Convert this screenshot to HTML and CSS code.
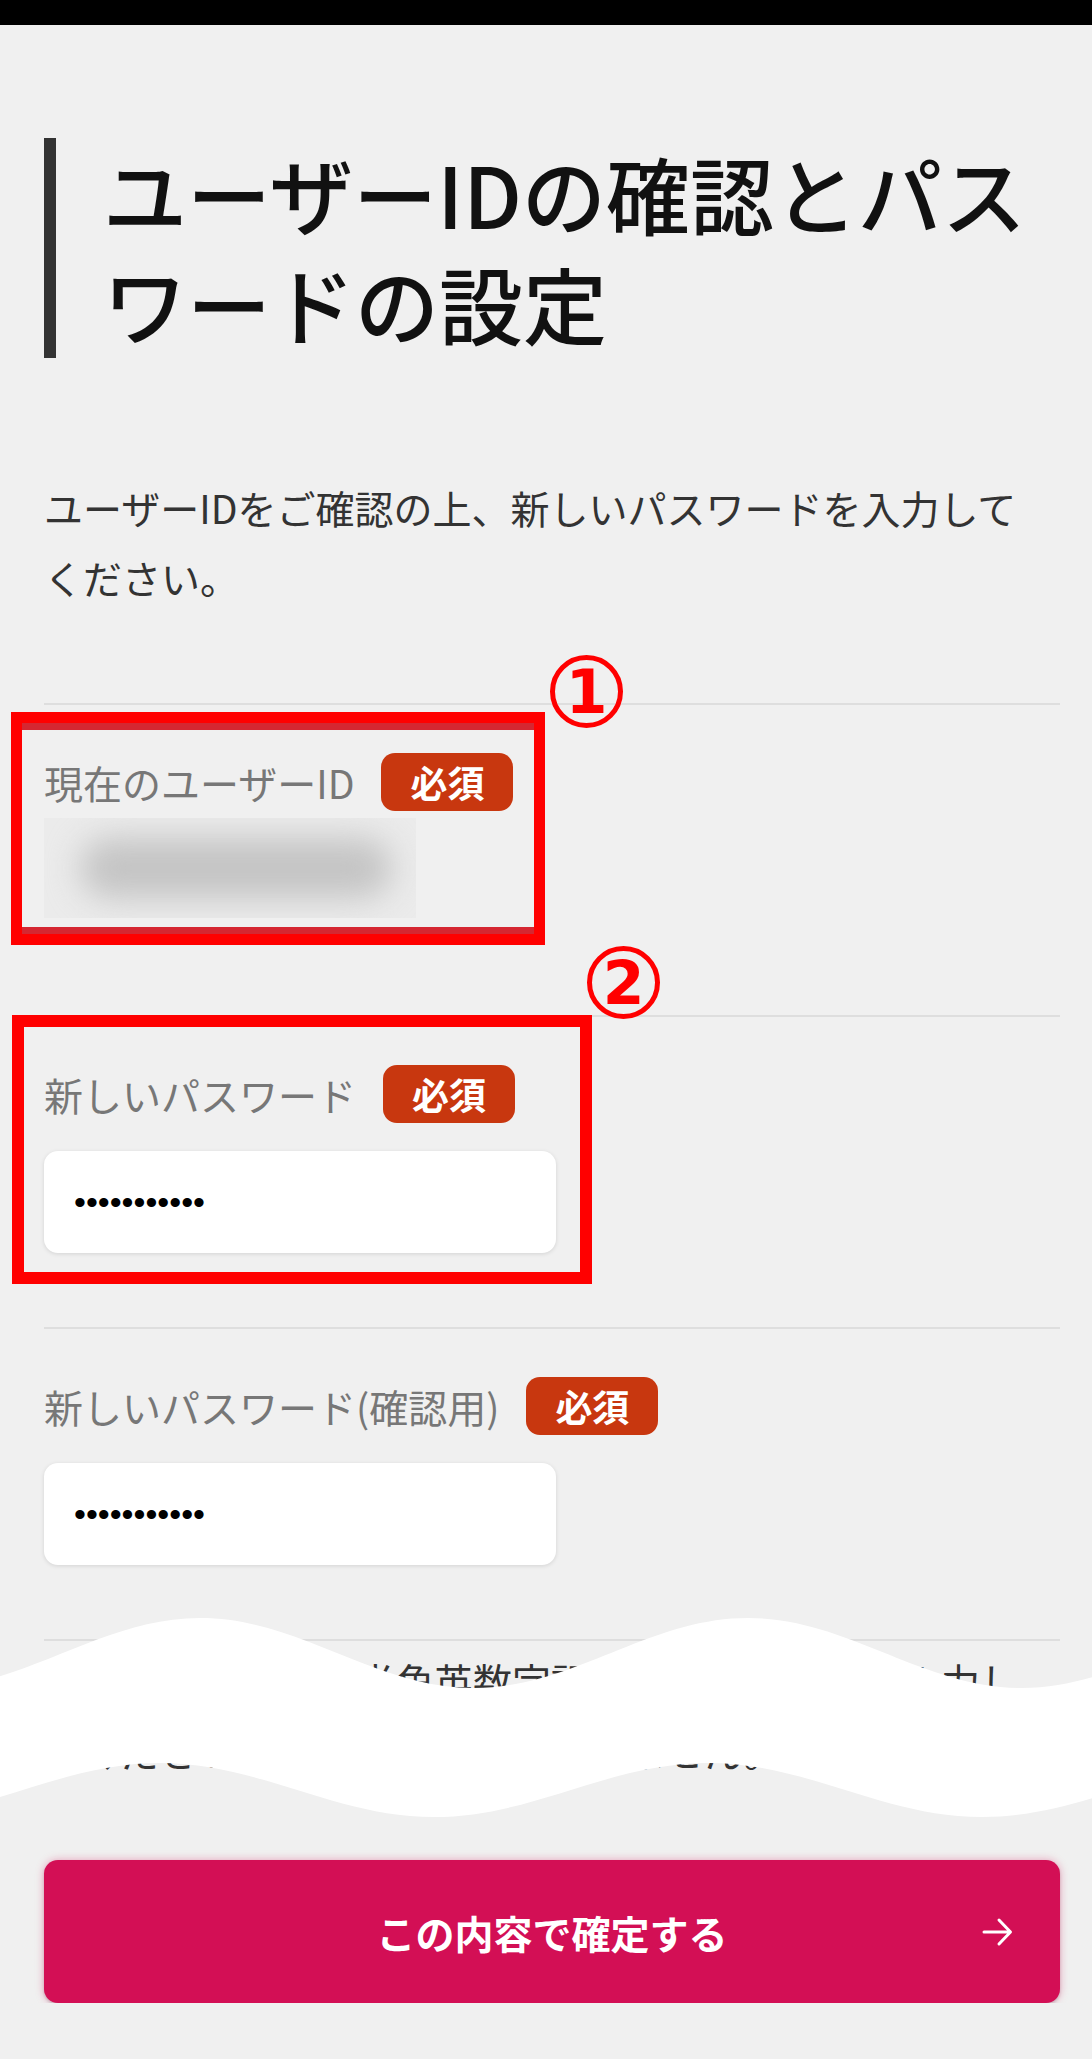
FILE: index.html
```html
<!DOCTYPE html>
<html lang="ja">
<head>
<meta charset="utf-8">
<title>ユーザーIDの確認とパスワードの設定</title>
<link rel="stylesheet" href="styles.css">
</head>
<body>
<div class="topbar"></div>
<main class="page">
  <h1 class="title">ユーザーIDの確認とパスワードの設定</h1>
  <p class="lead">ユーザーIDをご確認の上、新しいパスワードを入力してください。</p>

  <div class="form">
    <div class="field">
      <div class="field-head">
        <span class="field-label">現在のユーザーID</span>
        <span class="badge">必須</span>
      </div>
      <div class="masked"><div class="masked-blob"></div></div>
      <div class="mark-box mark-box--1"></div>
      <div class="mark-num mark-num--1">1</div>
    </div>

    <div class="field">
      <div class="field-head">
        <span class="field-label">新しいパスワード</span>
        <span class="badge">必須</span>
      </div>
      <div class="input">•••••••••••</div>
      <div class="mark-box mark-box--2"></div>
      <div class="mark-num mark-num--2">2</div>
    </div>

    <div class="field">
      <div class="field-head">
        <span class="field-label">新しいパスワード(確認用)</span>
        <span class="badge">必須</span>
      </div>
      <div class="input">•••••••••••</div>
    </div>
  </div>

  <div class="note">
    <p class="note-text">パスワードは必ず半角英数字記号を組み合わせて入力してください。記号は一部使用できません。</p>
    <svg class="cut" viewBox="0 0 1092 240" preserveAspectRatio="none" aria-hidden="true">
      <path fill="#ffffff" d="M -74 88 C 26 88, 100 18, 200 18 C 300 18, 374 88, 474 88 C 574 88, 648 18, 748 18 C 848 18, 922 88, 1022 88 C 1122 88, 1196 18, 1296 18 L 1256 163 C 1156 163, 1082 217, 982 217 C 882 217, 808 163, 708 163 C 608 163, 534 217, 434 217 C 334 217, 260 163, 160 163 C 60 163, -14 217, -114 217 Z"/>
    </svg>
  </div>

  <button class="submit" type="button">
    <span class="submit-label">この内容で確定する</span>
    <svg class="submit-arrow" viewBox="0 0 31 34" aria-hidden="true">
      <path d="M2 17 H28 M17 5 L28.5 17 L17 29" fill="none" stroke="#ffffff" stroke-width="3" stroke-linecap="round" stroke-linejoin="round"/>
    </svg>
  </button>
</main>
</body>
</html>
```
FILE: styles.css
```css
* { box-sizing: border-box; }

html, body { margin: 0; padding: 0; }

body {
  background: #f0f0f0;
  font-family: "Noto Sans CJK JP", "Noto Sans", sans-serif;
  color: #333;
}

.topbar {
  height: 25px;
  background: #000;
}

.page {
  padding: 0 32px 0 44px;
}

.title {
  margin: 113px 0 0;
  border-left: 12px solid #333;
  padding-left: 47px;
  font-size: 84px;
  line-height: 110px;
  font-weight: 500;
  color: #111;
}

.lead {
  margin: 114px 0 0;
  padding-right: 24px;
  font-size: 39px;
  line-height: 70px;
  color: #333;
}

.form {
  margin-top: 91px;
}

.field {
  position: relative;
  border-top: 2px solid #dedede;
  padding: 48px 0 74px;
}

.field-head {
  display: flex;
  align-items: center;
  gap: 27px;
  height: 58px;
}

.field-label {
  font-size: 39px;
  line-height: 1;
  color: #777;
}

.badge {
  display: flex;
  align-items: center;
  justify-content: center;
  height: 58px;
  padding: 0 29px;
  background: #c8370f;
  color: #fff;
  border-radius: 14px;
  font-size: 37px;
  font-weight: 700;
  line-height: 1;
}

.input {
  margin-top: 28px;
  width: 512px;
  height: 102px;
  background: #fff;
  border-radius: 14px;
  box-shadow: 0 1px 4px rgba(0, 0, 0, 0.12);
  display: flex;
  align-items: center;
  padding-left: 30px;
  font-family: "Liberation Sans", sans-serif;
  font-size: 34px;
  color: #000;
}

.masked {
  margin: 7px 0 23px;
  width: 372px;
  height: 100px;
  background: #ebebeb;
  overflow: hidden;
  padding: 20px 24px 0 36px;
}

.masked-blob {
  height: 60px;
  background: #c4c4c4;
  border-radius: 30px;
  filter: blur(16px);
}

/* annotation overlays */
.mark-box {
  position: absolute;
  border: 11px solid #ff0000;
}

.mark-box--1 {
  top: 7px;
  left: -33px;
  width: 534px;
  height: 233px;
  box-shadow: inset 0 7px 0 #d52731, inset 0 -7px 0 #d52731;
}

.mark-box--2 {
  top: -2px;
  left: -32px;
  width: 580px;
  height: 269px;
  border-width: 12px;
}

.mark-num {
  position: absolute;
  width: 73px;
  height: 73px;
  border: 5px solid #ff0000;
  border-radius: 50%;
  color: #ff0000;
  font-family: "DejaVu Sans", sans-serif;
  font-weight: 700;
  font-size: 60px;
  line-height: 1;
  display: flex;
  align-items: center;
  justify-content: center;
}

.mark-num--1 {
  left: 506px;
  top: -50px;
}

.mark-num--2 {
  left: 543px;
  top: -71px;
}

.note {
  position: relative;
  border-top: 2px solid #dedede;
  padding-top: 4px;
}

.note-text {
  margin: 0;
  padding-right: 24px;
  font-size: 39px;
  line-height: 70px;
  color: #333;
}

.cut {
  position: absolute;
  top: -41px;
  left: -44px;
  width: 1092px;
  height: 240px;
  display: block;
}

.submit {
  margin: 75px 0 0;
  display: grid;
  grid-template-columns: 1fr auto 1fr;
  align-items: center;
  width: 100%;
  height: 143px;
  border: 0;
  border-radius: 14px;
  background: #d30f55;
  color: #fff;
  font-family: "Noto Sans CJK JP", sans-serif;
  font-size: 39px;
  font-weight: 700;
  padding: 0 47px;
  box-shadow: 0 0 8px rgba(214, 15, 85, 0.35), 0 2px 3px rgba(0, 0, 0, 0.15);
}

.submit-label {
  grid-column: 2;
}

.submit-arrow {
  grid-column: 3;
  justify-self: end;
  width: 31px;
  height: 34px;
}
```
